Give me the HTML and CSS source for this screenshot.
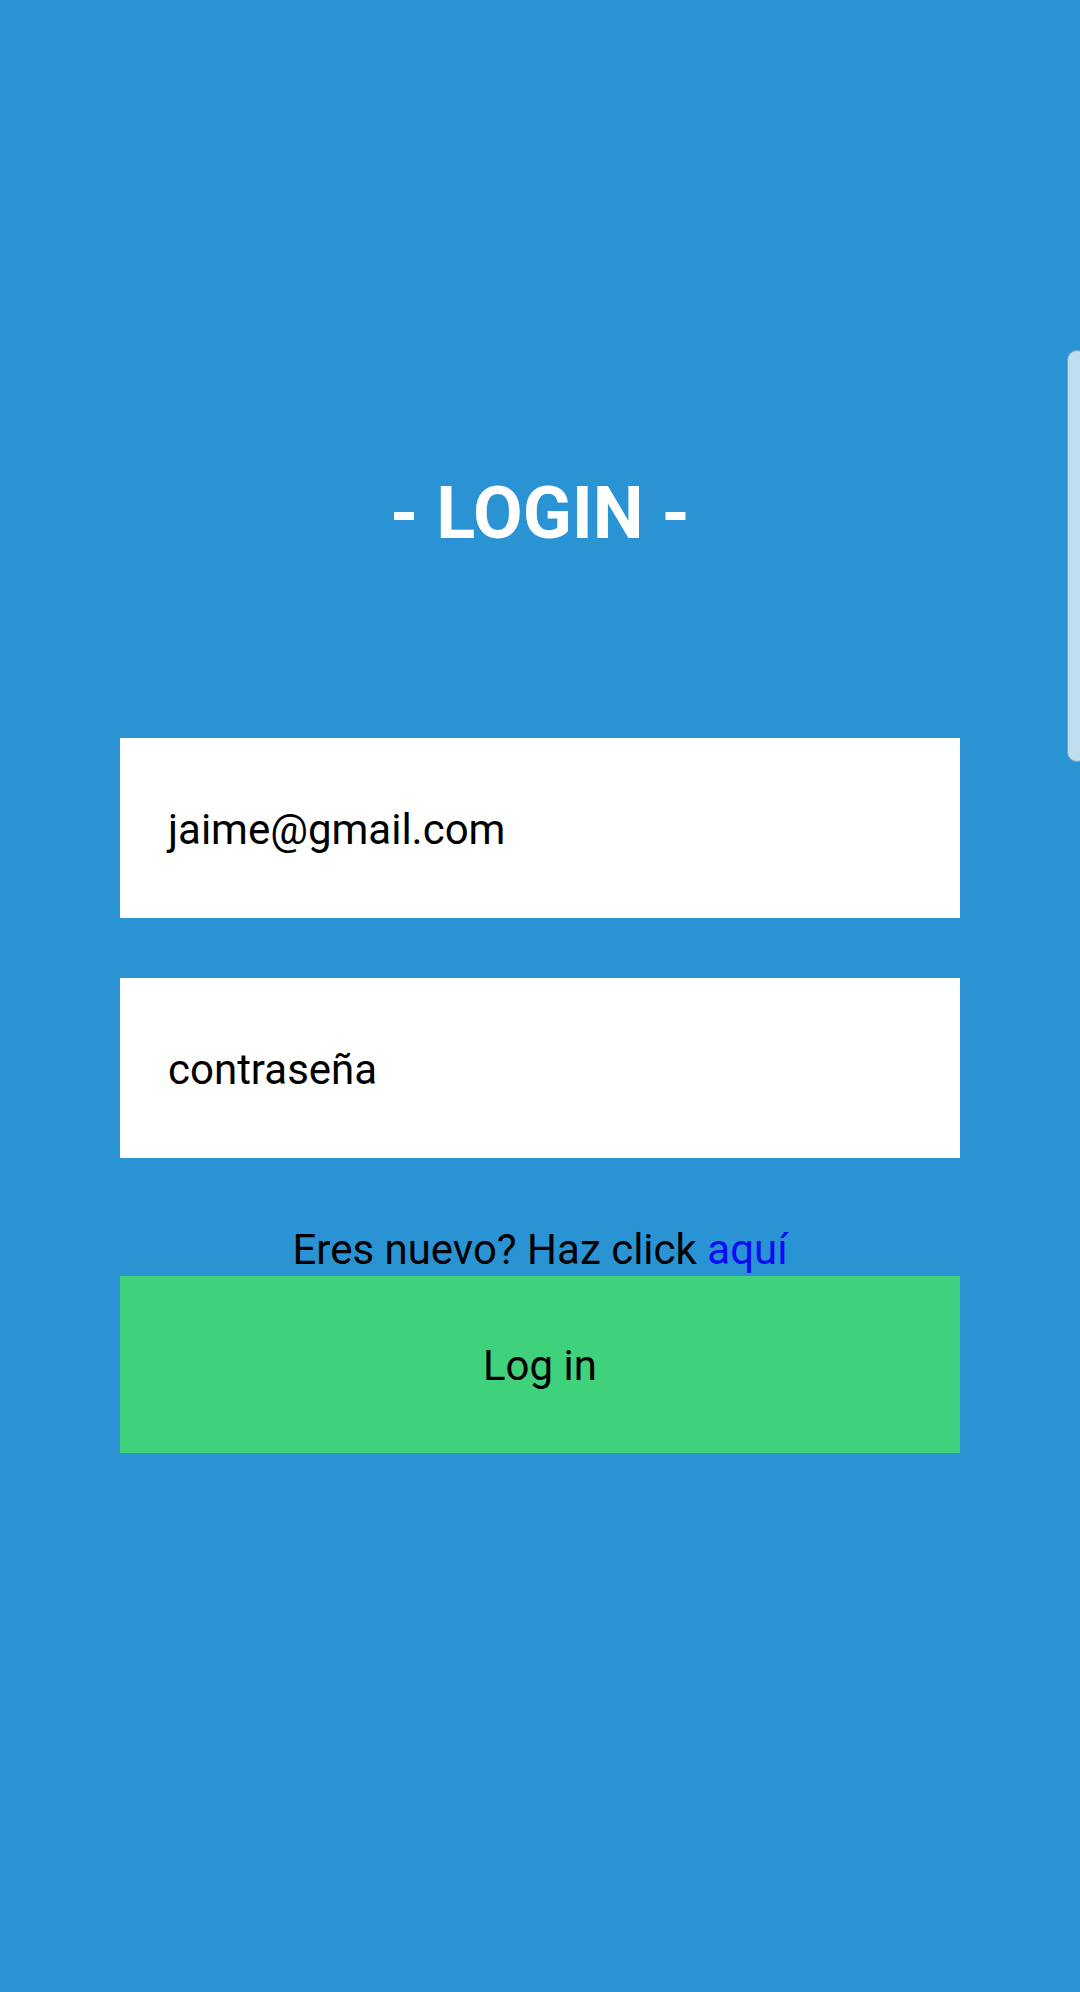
FILE: index.html
```html
<!DOCTYPE html>
<html lang="es">
<head>
<meta charset="utf-8">
<title>Login</title>
<link rel="stylesheet" href="styles.css">
</head>
<body>
<main class="screen">
  <h1 class="title">- LOGIN -</h1>
  <div class="field"><span class="value">jaime@gmail.com</span></div>
  <div class="field field-second"><span class="value">contraseña</span></div>
  <p class="signup">Eres nuevo? Haz click <a class="link" href="#">aquí</a></p>
  <div class="button">Log in</div>
</main>
<div class="edge-handle"></div>
</body>
</html>
```
FILE: styles.css
```css
html, body {
  margin: 0;
  padding: 0;
}
body {
  width: 1080px;
  height: 1992px;
  background: #2a93d4;
  font-family: Roboto, "Noto Sans", sans-serif;
  overflow: hidden;
  position: relative;
}
.screen {
  display: flex;
  flex-direction: column;
  align-items: center;
  padding-top: 470px;
}
.title {
  margin: 0;
  font-size: 72px;
  font-weight: 700;
  color: #ffffff;
  line-height: 87px;
  height: 87px;
}
.field {
  margin-top: 181px;
  width: 840px;
  height: 180px;
  background: #ffffff;
  display: flex;
  align-items: center;
  box-sizing: border-box;
  padding-left: 48px;
}
.field-second {
  margin-top: 60px;
}
.value {
  font-size: 42px;
  color: #000000;
  position: relative;
  top: 1px;
}
.signup {
  margin: 68px 0 2px 0;
  font-size: 42px;
  line-height: 48px;
  color: #000000;
}
.link {
  color: #0a0af5;
  text-decoration: none;
}
.button {
  width: 840px;
  height: 177px;
  background: #3fd17c;
  display: flex;
  align-items: center;
  justify-content: center;
  font-size: 42px;
  color: #000000;
  padding-top: 2px;
  box-sizing: border-box;
}
.edge-handle {
  position: absolute;
  left: 1067px;
  top: 350px;
  width: 20px;
  height: 412px;
  background: #c0def0;
  border: 1px solid #7fa5bd;
  border-radius: 11px;
  box-sizing: border-box;
}
```
